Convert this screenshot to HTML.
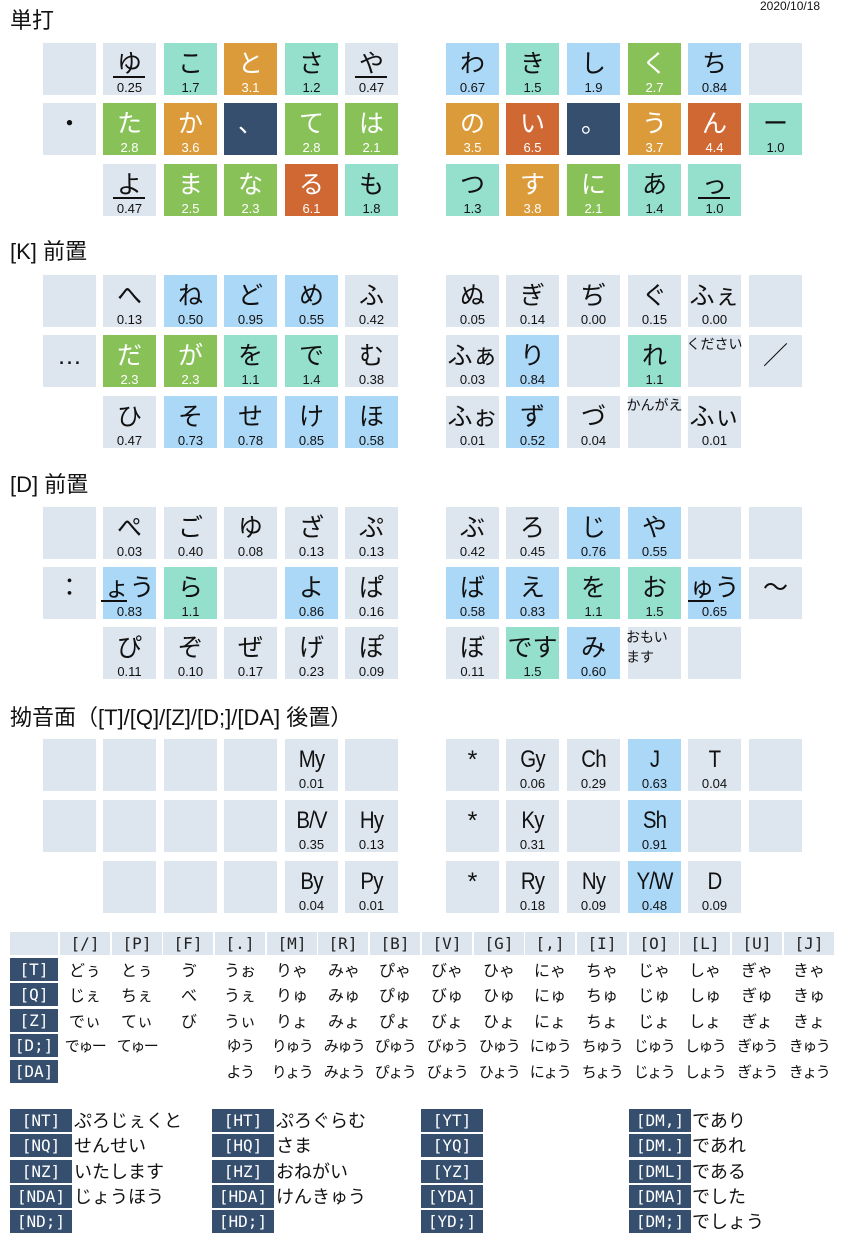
<!DOCTYPE html>
<html><head><meta charset="utf-8"><style>
*{margin:0;padding:0;box-sizing:border-box}
body{width:845px;height:1244px;background:#fff;position:relative;overflow:hidden;font-family:"Liberation Sans","Noto Sans CJK JP",sans-serif;color:#111}
.t{position:absolute;left:10px;font-size:22px;line-height:28px;font-family:"Liberation Sans","Noto Sans CJK JP",sans-serif}
.date{position:absolute;left:760px;top:-1px;font-size:12px;line-height:14px}
.r{position:absolute;left:0;width:845px;height:52px}
.c{position:absolute;top:0;width:53px;height:52px;text-align:center;overflow:visible}
.c .k{position:absolute;top:3px;left:-10px;right:-10px;font-size:25px;line-height:36px;white-space:nowrap}
.c .v{position:absolute;bottom:0;left:0;right:0;font-size:13px;line-height:15px}
.c .s{position:absolute;top:0;left:-6px;right:-6px;font-size:14px;line-height:18px;white-space:nowrap}
.c .L{font-family:"Liberation Sans",sans-serif;font-size:24px;letter-spacing:-1px;transform:scaleX(.85)}
.u{position:absolute;top:33px;left:10px;width:32px;height:2px;background:#111}
.c0{left:43px}.c1{left:103px}.c2{left:164px}.c3{left:224px}.c4{left:285px}.c5{left:345px}
.c6{left:446px}.c7{left:506px}.c8{left:567px}.c9{left:628px}.c10{left:688px}.c11{left:749px}
.g{background:#dde5ee}.te{background:#95dfcd}.o{background:#dc9b3b;color:#fff}.gr{background:#88c158;color:#fff}
.re{background:#d06833;color:#fff}.n{background:#364f6e;color:#fff}.b{background:#acd8f8}
.h{position:absolute;top:932px;height:23px;width:50px;background:#dde5ee;text-align:center;line-height:23px;font-family:"DejaVu Sans Mono",monospace;font-size:16px;color:#222}
.lab{position:absolute;left:10px;width:48px;height:23px;background:#364f6e;color:#fff;text-align:center;line-height:23px;font-family:"DejaVu Sans Mono",monospace;font-size:16px}
.row{position:absolute;left:60px;height:23px;line-height:23px;font-size:16px;font-family:"Noto Sans CJK JP",sans-serif}
.row span{position:absolute;top:0;width:52px;text-align:center;white-space:nowrap}
.bx{position:absolute;height:23px;background:#364f6e;color:#fff;text-align:center;line-height:23px;font-family:"DejaVu Sans Mono",monospace;font-size:16px}
.bt{position:absolute;font-size:18px;line-height:23px;font-family:"Noto Sans CJK JP",sans-serif}
</style></head><body>
<div class="date">2020/10/18</div>

<div class="t" style="top:7px">単打</div>
<div class="r" style="top:43px">
<div class="c c0 g"></div>
<div class="c c1 g"><div class="k">ゆ</div><div class="u"></div><div class="v">0.25</div></div>
<div class="c c2 te"><div class="k">こ</div><div class="v">1.7</div></div>
<div class="c c3 o"><div class="k">と</div><div class="v">3.1</div></div>
<div class="c c4 te"><div class="k">さ</div><div class="v">1.2</div></div>
<div class="c c5 g"><div class="k">や</div><div class="u"></div><div class="v">0.47</div></div>
<div class="c c6 b"><div class="k">わ</div><div class="v">0.67</div></div>
<div class="c c7 te"><div class="k">き</div><div class="v">1.5</div></div>
<div class="c c8 b"><div class="k">し</div><div class="v">1.9</div></div>
<div class="c c9 gr"><div class="k">く</div><div class="v">2.7</div></div>
<div class="c c10 b"><div class="k">ち</div><div class="v">0.84</div></div>
<div class="c c11 g"></div>
</div>
<div class="r" style="top:103px">
<div class="c c0 g"><div class="k">・</div></div>
<div class="c c1 gr"><div class="k">た</div><div class="v">2.8</div></div>
<div class="c c2 o"><div class="k">か</div><div class="v">3.6</div></div>
<div class="c c3 n"><div class="k">、</div></div>
<div class="c c4 gr"><div class="k">て</div><div class="v">2.8</div></div>
<div class="c c5 gr"><div class="k">は</div><div class="v">2.1</div></div>
<div class="c c6 o"><div class="k">の</div><div class="v">3.5</div></div>
<div class="c c7 re"><div class="k">い</div><div class="v">6.5</div></div>
<div class="c c8 n"><div class="k">。</div></div>
<div class="c c9 o"><div class="k">う</div><div class="v">3.7</div></div>
<div class="c c10 re"><div class="k">ん</div><div class="v">4.4</div></div>
<div class="c c11 te"><div class="k">ー</div><div class="v">1.0</div></div>
</div>
<div class="r" style="top:164px">
<div class="c c1 g"><div class="k">よ</div><div class="u"></div><div class="v">0.47</div></div>
<div class="c c2 gr"><div class="k">ま</div><div class="v">2.5</div></div>
<div class="c c3 gr"><div class="k">な</div><div class="v">2.3</div></div>
<div class="c c4 re"><div class="k">る</div><div class="v">6.1</div></div>
<div class="c c5 te"><div class="k">も</div><div class="v">1.8</div></div>
<div class="c c6 te"><div class="k">つ</div><div class="v">1.3</div></div>
<div class="c c7 o"><div class="k">す</div><div class="v">3.8</div></div>
<div class="c c8 gr"><div class="k">に</div><div class="v">2.1</div></div>
<div class="c c9 te"><div class="k">あ</div><div class="v">1.4</div></div>
<div class="c c10 te"><div class="k">っ</div><div class="u"></div><div class="v">1.0</div></div>
</div>

<div class="t" style="top:238px">[K] 前置</div>
<div class="r" style="top:275px">
<div class="c c0 g"></div>
<div class="c c1 g"><div class="k">へ</div><div class="v">0.13</div></div>
<div class="c c2 b"><div class="k">ね</div><div class="v">0.50</div></div>
<div class="c c3 b"><div class="k">ど</div><div class="v">0.95</div></div>
<div class="c c4 b"><div class="k">め</div><div class="v">0.55</div></div>
<div class="c c5 g"><div class="k">ふ</div><div class="v">0.42</div></div>
<div class="c c6 g"><div class="k">ぬ</div><div class="v">0.05</div></div>
<div class="c c7 g"><div class="k">ぎ</div><div class="v">0.14</div></div>
<div class="c c8 g"><div class="k">ぢ</div><div class="v">0.00</div></div>
<div class="c c9 g"><div class="k">ぐ</div><div class="v">0.15</div></div>
<div class="c c10 g"><div class="k">ふぇ</div><div class="v">0.00</div></div>
<div class="c c11 g"></div>
</div>
<div class="r" style="top:335px">
<div class="c c0 g"><div class="k">…</div></div>
<div class="c c1 gr"><div class="k">だ</div><div class="v">2.3</div></div>
<div class="c c2 gr"><div class="k">が</div><div class="v">2.3</div></div>
<div class="c c3 te"><div class="k">を</div><div class="v">1.1</div></div>
<div class="c c4 te"><div class="k">で</div><div class="v">1.4</div></div>
<div class="c c5 g"><div class="k">む</div><div class="v">0.38</div></div>
<div class="c c6 g"><div class="k">ふぁ</div><div class="v">0.03</div></div>
<div class="c c7 b"><div class="k">り</div><div class="v">0.84</div></div>
<div class="c c8 g"></div>
<div class="c c9 te"><div class="k">れ</div><div class="v">1.1</div></div>
<div class="c c10 g"><div class="s">ください</div></div>
<div class="c c11 g"><div class="k">／</div></div>
</div>
<div class="r" style="top:396px">
<div class="c c1 g"><div class="k">ひ</div><div class="v">0.47</div></div>
<div class="c c2 b"><div class="k">そ</div><div class="v">0.73</div></div>
<div class="c c3 b"><div class="k">せ</div><div class="v">0.78</div></div>
<div class="c c4 b"><div class="k">け</div><div class="v">0.85</div></div>
<div class="c c5 b"><div class="k">ほ</div><div class="v">0.58</div></div>
<div class="c c6 g"><div class="k">ふぉ</div><div class="v">0.01</div></div>
<div class="c c7 b"><div class="k">ず</div><div class="v">0.52</div></div>
<div class="c c8 g"><div class="k">づ</div><div class="v">0.04</div></div>
<div class="c c9 g"><div class="s">かんがえ</div></div>
<div class="c c10 g"><div class="k">ふぃ</div><div class="v">0.01</div></div>
</div>

<div class="t" style="top:471px">[D] 前置</div>
<div class="r" style="top:507px">
<div class="c c0 g"></div>
<div class="c c1 g"><div class="k">ぺ</div><div class="v">0.03</div></div>
<div class="c c2 g"><div class="k">ご</div><div class="v">0.40</div></div>
<div class="c c3 g"><div class="k">ゆ</div><div class="v">0.08</div></div>
<div class="c c4 g"><div class="k">ざ</div><div class="v">0.13</div></div>
<div class="c c5 g"><div class="k">ぷ</div><div class="v">0.13</div></div>
<div class="c c6 g"><div class="k">ぶ</div><div class="v">0.42</div></div>
<div class="c c7 g"><div class="k">ろ</div><div class="v">0.45</div></div>
<div class="c c8 b"><div class="k">じ</div><div class="v">0.76</div></div>
<div class="c c9 b"><div class="k">や</div><div class="v">0.55</div></div>
<div class="c c10 g"></div>
<div class="c c11 g"></div>
</div>
<div class="r" style="top:567px">
<div class="c c0 g"><div class="k">：</div></div>
<div class="c c1 b"><div class="k">ょう</div><div class="u" style="left:-2px;width:26px"></div><div class="v">0.83</div></div>
<div class="c c2 te"><div class="k">ら</div><div class="v">1.1</div></div>
<div class="c c3 g"></div>
<div class="c c4 b"><div class="k">よ</div><div class="v">0.86</div></div>
<div class="c c5 g"><div class="k">ぱ</div><div class="v">0.16</div></div>
<div class="c c6 b"><div class="k">ば</div><div class="v">0.58</div></div>
<div class="c c7 b"><div class="k">え</div><div class="v">0.83</div></div>
<div class="c c8 te"><div class="k">を</div><div class="v">1.1</div></div>
<div class="c c9 te"><div class="k">お</div><div class="v">1.5</div></div>
<div class="c c10 b"><div class="k">ゅう</div><div class="u" style="left:0;width:26px"></div><div class="v">0.65</div></div>
<div class="c c11 g"><div class="k">〜</div></div>
</div>
<div class="r" style="top:627px">
<div class="c c1 g"><div class="k">ぴ</div><div class="v">0.11</div></div>
<div class="c c2 g"><div class="k">ぞ</div><div class="v">0.10</div></div>
<div class="c c3 g"><div class="k">ぜ</div><div class="v">0.17</div></div>
<div class="c c4 g"><div class="k">げ</div><div class="v">0.23</div></div>
<div class="c c5 g"><div class="k">ぽ</div><div class="v">0.09</div></div>
<div class="c c6 g"><div class="k">ぼ</div><div class="v">0.11</div></div>
<div class="c c7 te"><div class="k">です</div><div class="v">1.5</div></div>
<div class="c c8 b"><div class="k">み</div><div class="v">0.60</div></div>
<div class="c c9 g"><div class="s" style="left:-2px;text-align:left;white-space:normal;width:44px;line-height:20px">おもいます</div></div>
<div class="c c10 g"></div>
</div>

<div class="t" style="top:704px">拗音面（[T]/[Q]/[Z]/[D;]/[DA] 後置）</div>
<div class="r" style="top:739px">
<div class="c c0 g"></div><div class="c c1 g"></div><div class="c c2 g"></div><div class="c c3 g"></div>
<div class="c c4 g"><div class="k L">My</div><div class="v">0.01</div></div>
<div class="c c5 g"></div>
<div class="c c6 g"><div class="k">*</div></div>
<div class="c c7 g"><div class="k L">Gy</div><div class="v">0.06</div></div>
<div class="c c8 g"><div class="k L">Ch</div><div class="v">0.29</div></div>
<div class="c c9 b"><div class="k L">J</div><div class="v">0.63</div></div>
<div class="c c10 g"><div class="k L">T</div><div class="v">0.04</div></div>
<div class="c c11 g"></div>
</div>
<div class="r" style="top:800px">
<div class="c c0 g"></div><div class="c c1 g"></div><div class="c c2 g"></div><div class="c c3 g"></div>
<div class="c c4 g"><div class="k L">B/V</div><div class="v">0.35</div></div>
<div class="c c5 g"><div class="k L">Hy</div><div class="v">0.13</div></div>
<div class="c c6 g"><div class="k">*</div></div>
<div class="c c7 g"><div class="k L">Ky</div><div class="v">0.31</div></div>
<div class="c c8 g"></div>
<div class="c c9 b"><div class="k L">Sh</div><div class="v">0.91</div></div>
<div class="c c10 g"></div>
<div class="c c11 g"></div>
</div>
<div class="r" style="top:861px">
<div class="c c1 g"></div><div class="c c2 g"></div><div class="c c3 g"></div>
<div class="c c4 g"><div class="k L">By</div><div class="v">0.04</div></div>
<div class="c c5 g"><div class="k L">Py</div><div class="v">0.01</div></div>
<div class="c c6 g"><div class="k">*</div></div>
<div class="c c7 g"><div class="k L">Ry</div><div class="v">0.18</div></div>
<div class="c c8 g"><div class="k L">Ny</div><div class="v">0.09</div></div>
<div class="c c9 b"><div class="k L">Y/W</div><div class="v">0.48</div></div>
<div class="c c10 g"><div class="k L">D</div><div class="v">0.09</div></div>
</div>

<div class="h" style="left:10px;width:48px"></div>
<div class="h" style="left:60px">[/]</div>
<div class="h" style="left:112px">[P]</div>
<div class="h" style="left:163px">[F]</div>
<div class="h" style="left:215px">[.]</div>
<div class="h" style="left:267px">[M]</div>
<div class="h" style="left:318px">[R]</div>
<div class="h" style="left:370px">[B]</div>
<div class="h" style="left:422px">[V]</div>
<div class="h" style="left:474px">[G]</div>
<div class="h" style="left:525px">[,]</div>
<div class="h" style="left:577px">[I]</div>
<div class="h" style="left:629px">[O]</div>
<div class="h" style="left:680px">[L]</div>
<div class="h" style="left:732px">[U]</div>
<div class="h" style="left:784px">[J]</div>

<div class="lab" style="top:958px">[T]</div>
<div class="lab" style="top:983px">[Q]</div>
<div class="lab" style="top:1009px">[Z]</div>
<div class="lab" style="top:1034px">[D;]</div>
<div class="lab" style="top:1060px">[DA]</div>

<div class="row" style="top:958px">
<span style="left:-1px">どぅ</span><span style="left:51px">とぅ</span><span style="left:103px">ゔ</span><span style="left:154px">うぉ</span><span style="left:206px">りゃ</span><span style="left:258px">みゃ</span><span style="left:309px">ぴゃ</span><span style="left:361px">びゃ</span><span style="left:413px">ひゃ</span><span style="left:464px">にゃ</span><span style="left:516px">ちゃ</span><span style="left:568px">じゃ</span><span style="left:619px">しゃ</span><span style="left:671px">ぎゃ</span><span style="left:723px">きゃ</span>
</div>
<div class="row" style="top:983px">
<span style="left:-1px">じぇ</span><span style="left:51px">ちぇ</span><span style="left:103px">べ</span><span style="left:154px">うぇ</span><span style="left:206px">りゅ</span><span style="left:258px">みゅ</span><span style="left:309px">ぴゅ</span><span style="left:361px">びゅ</span><span style="left:413px">ひゅ</span><span style="left:464px">にゅ</span><span style="left:516px">ちゅ</span><span style="left:568px">じゅ</span><span style="left:619px">しゅ</span><span style="left:671px">ぎゅ</span><span style="left:723px">きゅ</span>
</div>
<div class="row" style="top:1009px">
<span style="left:-1px">でぃ</span><span style="left:51px">てぃ</span><span style="left:103px">び</span><span style="left:154px">うぃ</span><span style="left:206px">りょ</span><span style="left:258px">みょ</span><span style="left:309px">ぴょ</span><span style="left:361px">びょ</span><span style="left:413px">ひょ</span><span style="left:464px">にょ</span><span style="left:516px">ちょ</span><span style="left:568px">じょ</span><span style="left:619px">しょ</span><span style="left:671px">ぎょ</span><span style="left:723px">きょ</span>
</div>
<div class="row" style="top:1034px;font-size:15px;letter-spacing:-1.5px">
<span style="left:-1px">でゅー</span><span style="left:51px">てゅー</span><span style="left:154px">ゆう</span><span style="left:206px">りゅう</span><span style="left:258px">みゅう</span><span style="left:309px">ぴゅう</span><span style="left:361px">びゅう</span><span style="left:413px">ひゅう</span><span style="left:464px">にゅう</span><span style="left:516px">ちゅう</span><span style="left:568px">じゅう</span><span style="left:619px">しゅう</span><span style="left:671px">ぎゅう</span><span style="left:723px">きゅう</span>
</div>
<div class="row" style="top:1060px;font-size:15px;letter-spacing:-1.5px">
<span style="left:154px">よう</span><span style="left:206px">りょう</span><span style="left:258px">みょう</span><span style="left:309px">ぴょう</span><span style="left:361px">びょう</span><span style="left:413px">ひょう</span><span style="left:464px">にょう</span><span style="left:516px">ちょう</span><span style="left:568px">じょう</span><span style="left:619px">しょう</span><span style="left:671px">ぎょう</span><span style="left:723px">きょう</span>
</div>

<div class="bx" style="left:10px;top:1109px;width:62px">[NT]</div><div class="bt" style="left:74px;top:1109px">ぷろじぇくと</div>
<div class="bx" style="left:10px;top:1134px;width:62px">[NQ]</div><div class="bt" style="left:74px;top:1134px">せんせい</div>
<div class="bx" style="left:10px;top:1160px;width:62px">[NZ]</div><div class="bt" style="left:74px;top:1160px">いたします</div>
<div class="bx" style="left:10px;top:1185px;width:62px">[NDA]</div><div class="bt" style="left:74px;top:1185px">じょうほう</div>
<div class="bx" style="left:10px;top:1210px;width:62px">[ND;]</div>

<div class="bx" style="left:212px;top:1109px;width:62px">[HT]</div><div class="bt" style="left:276px;top:1109px">ぷろぐらむ</div>
<div class="bx" style="left:212px;top:1134px;width:62px">[HQ]</div><div class="bt" style="left:276px;top:1134px">さま</div>
<div class="bx" style="left:212px;top:1160px;width:62px">[HZ]</div><div class="bt" style="left:276px;top:1160px">おねがい</div>
<div class="bx" style="left:212px;top:1185px;width:62px">[HDA]</div><div class="bt" style="left:276px;top:1185px">けんきゅう</div>
<div class="bx" style="left:212px;top:1210px;width:62px">[HD;]</div>

<div class="bx" style="left:421px;top:1109px;width:62px">[YT]</div>
<div class="bx" style="left:421px;top:1134px;width:62px">[YQ]</div>
<div class="bx" style="left:421px;top:1160px;width:62px">[YZ]</div>
<div class="bx" style="left:421px;top:1185px;width:62px">[YDA]</div>
<div class="bx" style="left:421px;top:1210px;width:62px">[YD;]</div>

<div class="bx" style="left:629px;top:1109px;width:62px">[DM,]</div><div class="bt" style="left:692px;top:1109px">であり</div>
<div class="bx" style="left:629px;top:1134px;width:62px">[DM.]</div><div class="bt" style="left:692px;top:1134px">であれ</div>
<div class="bx" style="left:629px;top:1160px;width:62px">[DML]</div><div class="bt" style="left:692px;top:1160px">である</div>
<div class="bx" style="left:629px;top:1185px;width:62px">[DMA]</div><div class="bt" style="left:692px;top:1185px">でした</div>
<div class="bx" style="left:629px;top:1210px;width:62px">[DM;]</div><div class="bt" style="left:692px;top:1210px">でしょう</div>
</body></html>
